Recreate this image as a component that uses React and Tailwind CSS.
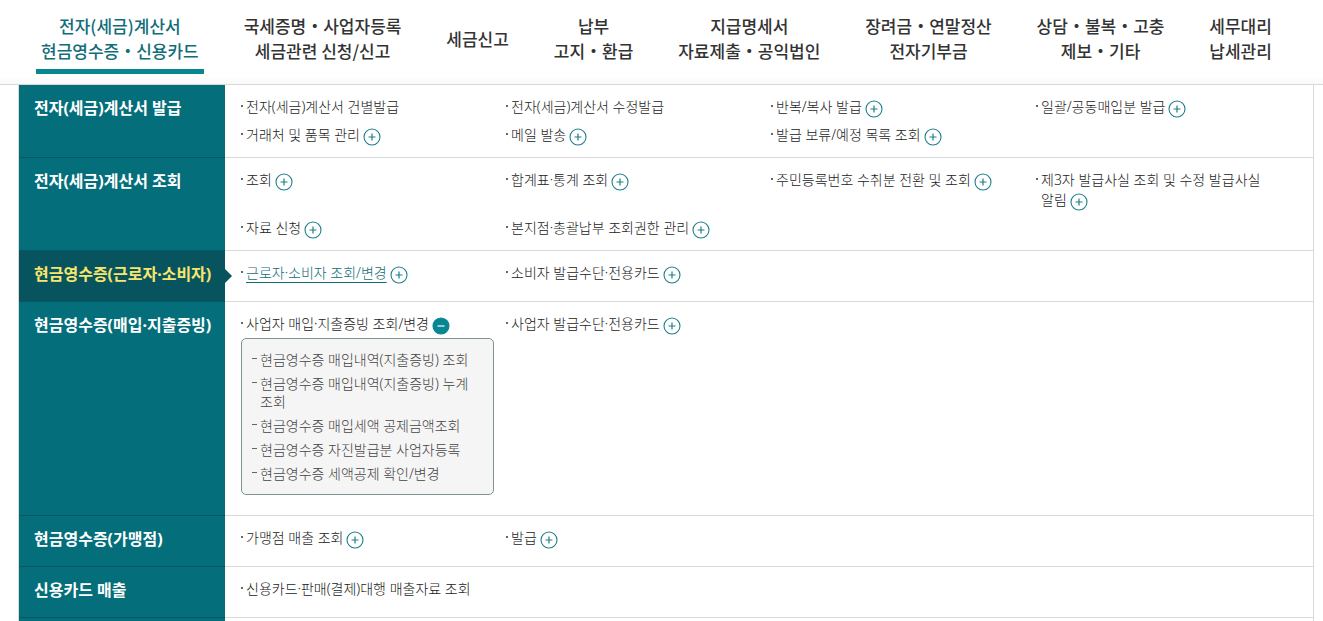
import React, { useState } from 'react';

const NAV_ITEMS = [
  { lines: ['전자(세금)계산서', '현금영수증・신용카드'] },
  { lines: ['국세증명・사업자등록', '세금관련 신청/신고'] },
  { lines: ['세금신고'] },
  { lines: ['납부', '고지・환급'] },
  { lines: ['지급명세서', '자료제출・공익법인'] },
  { lines: ['장려금・연말정산', '전자기부금'] },
  { lines: ['상담・불복・고충', '제보・기타'] },
  { lines: ['세무대리', '납세관리'] },
];

const SECTIONS = [
  {
    title: '전자(세금)계산서 발급',
    items: [
      { label: '전자(세금)계산서 건별발급' },
      { label: '전자(세금)계산서 수정발급' },
      { label: '반복/복사 발급', more: true },
      { label: '일괄/공동매입분 발급', more: true },
      { label: '거래처 및 품목 관리', more: true },
      { label: '메일 발송', more: true },
      { label: '발급 보류/예정 목록 조회', more: true },
    ],
  },
  {
    title: '전자(세금)계산서 조회',
    items: [
      { label: '조회', more: true },
      { label: '합계표·통계 조회', more: true },
      { label: '주민등록번호 수취분 전환 및 조회', more: true },
      { label: '제3자 발급사실 조회 및 수정 발급사실 알림', more: true },
      { label: '자료 신청', more: true },
      { label: '본지점·총괄납부 조회권한 관리', more: true },
    ],
  },
  {
    title: '현금영수증(근로자·소비자)',
    active: true,
    items: [
      { label: '근로자·소비자 조회/변경', more: true, active: true },
      { label: '소비자 발급수단·전용카드', more: true },
    ],
  },
  {
    title: '현금영수증(매입·지출증빙)',
    items: [
      {
        label: '사업자 매입·지출증빙 조회/변경',
        more: true,
        children: [
          '현금영수증 매입내역(지출증빙) 조회',
          '현금영수증 매입내역(지출증빙) 누계 조회',
          '현금영수증 매입세액 공제금액조회',
          '현금영수증 자진발급분 사업자등록',
          '현금영수증 세액공제 확인/변경',
        ],
      },
      { label: '사업자 발급수단·전용카드', more: true },
    ],
  },
  {
    title: '현금영수증(가맹점)',
    items: [
      { label: '가맹점 매출 조회', more: true },
      { label: '발급', more: true },
    ],
  },
  {
    title: '신용카드 매출',
    items: [{ label: '신용카드·판매(결제)대행 매출자료 조회' }],
  },
];

const ToggleButton = ({ open, label, onClick }) => (
  <button
    type="button"
    aria-expanded={open}
    aria-label={label}
    onClick={onClick}
    className="-mt-[7px] -mb-[9px] ml-[3px] inline-block h-[18px] w-[18px] cursor-pointer align-middle"
  >
    <svg className="block h-[18px] w-[18px]" viewBox="0 0 18 18" fill="none">
      <circle
        cx="9"
        cy="9"
        r="8"
        fill={open ? '#078792' : '#ffffff'}
        stroke={open ? '#078792' : '#1d7f8a'}
        strokeWidth="1.1"
      />
      {open ? (
        <path d="M5.5 9h7" stroke="#ffffff" strokeWidth="1.2" />
      ) : (
        <path d="M5.5 9h7M9 5.5v7" stroke="#1d7f8a" strokeWidth="1.2" />
      )}
    </svg>
  </button>
);

const MenuItem = ({ item }) => {
  const [open, setOpen] = useState(Boolean(item.children));

  return (
    <li>
      <div className="flex pr-5">
        <span className="mt-2 mr-[3px] h-[2px] w-[2px] shrink-0 bg-[#666666]" />
        <div>
          <a
            href="#"
            className={
              item.active
                ? 'text-[#116d78] underline underline-offset-4'
                : 'text-[#222222] hover:underline'
            }
          >
            {item.label}
          </a>
          {item.more && (
            <ToggleButton open={open} label={`${item.label} 하위메뉴`} onClick={() => setOpen(!open)} />
          )}
        </div>
      </div>

      {/* Submenu */}
      {open && item.children && (
        <ul className="mt-1 mr-3 mb-2 flex flex-col gap-[6px] rounded-[5px] border border-[#7f9396] bg-[#f5f5f5] px-[10px] pt-3 pb-[11px] leading-[18px] text-[#444444]">
          {item.children.map((child) => (
            <li key={child} className="flex">
              <span className="mt-[7px] mr-[3px] h-px w-[5px] shrink-0 bg-[#666666]" />
              <a href="#" className="hover:underline">
                {child}
              </a>
            </li>
          ))}
        </ul>
      )}
    </li>
  );
};

const App = () => {
  const [current, setCurrent] = useState(0);

  return (
    <div className="flex min-h-screen flex-col bg-white font-['Noto_Sans','Noto_Sans_CJK_KR',sans-serif] break-keep">
      {/* Top navigation */}
      <nav className="border-b border-[#d9d9d9] bg-linear-to-t from-[#f9f9f9] to-white to-10%">
        <ul className="flex justify-between pt-[13px] pr-[46px] pb-[10px] pl-9">
          {NAV_ITEMS.map((item, index) => (
            <li key={item.lines[0]}>
              <a
                href="#"
                onClick={() => setCurrent(index)}
                className={`flex h-[61px] flex-col border-b-5 px-[5px] text-center font-['Noto_Sans_CJK_KR',sans-serif] text-[17px] leading-[25px] font-medium whitespace-nowrap ${
                  current === index
                    ? 'border-[#078792] text-[#116d78]'
                    : 'border-transparent text-[#333333]'
                }`}
              >
                <span className="flex h-[50px] flex-col justify-center">
                  {item.lines.map((line) => (
                    <span key={line}>{line}</span>
                  ))}
                </span>
              </a>
            </li>
          ))}
        </ul>
      </nav>

      {/* Menu panel */}
      <div className="mr-[9px] ml-[18px] flex grow flex-col border-x border-[#d9d9d9]">
        {SECTIONS.map((section) => (
          <section key={section.title} className="flex">
            <h2
              className={`relative w-[206px] shrink-0 border-b border-[#055a66] pt-[10px] pb-[14px] pl-[15px] text-base leading-[26px] font-bold ${
                section.active ? 'bg-[#07545f] text-[#f8e66c]' : 'bg-[#046e7b] text-white'
              }`}
            >
              <a href="#" className="block whitespace-nowrap">
                {section.title}
              </a>
              {section.active && (
                <svg
                  className="absolute top-1/2 left-full h-[14px] w-[7px] -translate-y-1/2"
                  viewBox="0 0 7 14"
                >
                  <path d="M0 0l7 7-7 7z" fill="#07545f" />
                </svg>
              )}
            </h2>
            <ul className="grid grow grid-cols-4 content-start gap-y-2 border-b border-[#d9d9d9] py-3 pr-3 pl-4 text-sm leading-5 font-light">
              {section.items.map((item) => (
                <MenuItem key={item.label} item={item} />
              ))}
            </ul>
          </section>
        ))}
        <div className="w-[206px] grow bg-[#046e7b]" />
      </div>
    </div>
  );
};

export default App;
